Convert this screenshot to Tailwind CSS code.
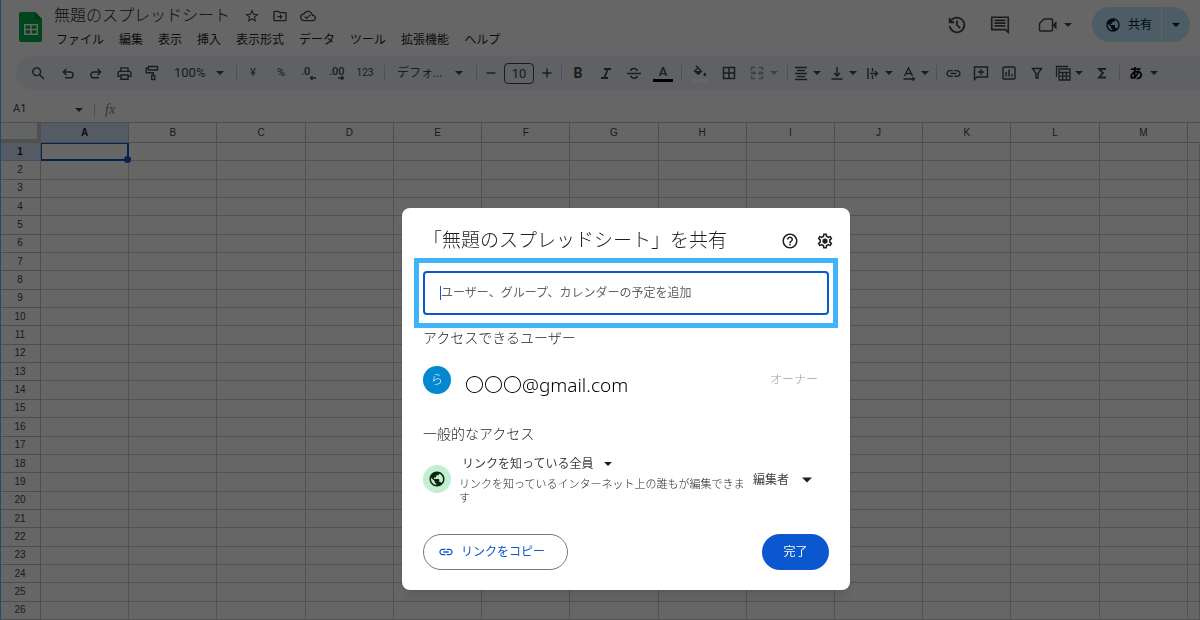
<!DOCTYPE html>
<html lang="ja">
<head>
<meta charset="utf-8">
<title>無題のスプレッドシート</title>
<script src="https://cdn.jsdelivr.net/npm/@tailwindcss/browser@4"></script>
</head>
<body class="relative flex h-screen flex-col overflow-hidden bg-white font-['Roboto','Noto_Sans_CJK_JP',sans-serif] text-xs text-[#444746]">

<svg class="hidden" aria-hidden="true">
  <symbol id="caret" viewBox="0 0 8 8"><path d="M0 2h8L4 6z"/></symbol>
  <symbol id="globe" viewBox="0 0 24 24"><path d="M12 2C6.48 2 2 6.48 2 12s4.48 10 10 10 10-4.48 10-10S17.52 2 12 2zm-1 17.93c-3.95-.49-7-3.85-7-7.93 0-.62.08-1.21.21-1.79L9 15v1c0 1.1.9 2 2 2v1.93zm6.9-2.54c-.26-.81-1-1.39-1.9-1.39h-1v-3c0-.55-.45-1-1-1H8v-2h2c.55 0 1-.45 1-1V7h2c1.1 0 2-.9 2-2v-.41c2.93 1.19 5 4.06 5 7.41 0 2.08-.8 3.97-2.1 5.39z"/></symbol>
  <symbol id="link" viewBox="0 0 24 24"><path d="M3.9 12c0-1.71 1.39-3.1 3.1-3.1h4V7H7c-2.76 0-5 2.24-5 5s2.24 5 5 5h4v-1.9H7c-1.71 0-3.1-1.39-3.1-3.1zM8 13h8v-2H8v2zm9-6h-4v1.9h4c1.71 0 3.1 1.39 3.1 3.1s-1.39 3.1-3.1 3.1h-4V17h4c2.76 0 5-2.24 5-5s-2.24-5-5-5z"/></symbol>
</svg>

<header class="flex h-14 shrink-0 items-start pl-[19px] pr-[10px]">
  <svg class="mt-[11px] h-8 w-6 shrink-0" viewBox="0 0 24 32"><path fill="#00ac47" d="M2 1h14l7 7v21a2 2 0 0 1-2 2H2a2 2 0 0 1-2-2V3a2 2 0 0 1 2-2z"/><path fill="#00832d" d="M16 1l7 7h-7z"/><path fill="#fff" fill-rule="evenodd" d="M5 13h14v11H5zM6.500 14.500v3.200h4.700v-3.200zm6.300 0v3.200h4.700v-3.200zM6.500 19.300v3.200h4.700v-3.200zm6.300 0v3.200h4.700v-3.200z"/></svg>
  <div class="ml-[11px] flex flex-col">
    <div class="mt-1 flex h-6 items-center">
      <h1 class="text-base font-light leading-6 text-[#1f1f1f]">無題のスプレッドシート</h1>
      <div class="ml-[14px] flex items-center gap-3">
        <button aria-label="スター" class="h-4 w-4"><svg class="h-4 w-4" viewBox="0 0 24 24" fill="currentColor"><path d="M22 9.240l-7.190-.620L12 2 9.190 8.630 2 9.240l5.460 4.730L5.820 21 12 17.270 18.180 21l-1.630-7.030L22 9.240zM12 15.400l-3.760 2.270 1-4.280-3.320-2.880 4.380-.380L12 6.100l1.710 4.040 4.380.380-3.320 2.880 1 4.280L12 15.400z"/></svg></button>
        <button aria-label="移動" class="h-4 w-4"><svg class="h-4 w-4" viewBox="0 0 24 24" fill="currentColor"><path d="M20 6h-8l-2-2H4c-1.100 0-2 .9-2 2v12c0 1.100.9 2 2 2h16c1.100 0 2-.9 2-2V8c0-1.100-.9-2-2-2zm0 12H4V6h5.170l2 2H20v10zm-8-1l4-4-4-4v3H8v2h4v3z"/></svg></button>
        <button aria-label="ドライブに保存しました" class="h-4 w-4"><svg class="h-4 w-4" viewBox="0 0 24 24" fill="currentColor"><path d="M19.350 10.040C18.670 6.590 15.640 4 12 4 9.110 4 6.600 5.640 5.350 8.040 2.340 8.360 0 10.910 0 14c0 3.310 2.690 6 6 6h13c2.760 0 5-2.240 5-5 0-2.640-2.050-4.780-4.650-4.960zM19 18H6c-2.210 0-4-1.790-4-4 0-2.050 1.530-3.760 3.560-3.970l1.070-.110.5-.950C8.080 7.140 9.940 6 12 6c2.620 0 4.880 1.860 5.390 4.430l.3 1.500 1.530.110c1.560.1 2.780 1.410 2.780 2.960 0 1.650-1.350 3-3 3zm-9-3.820l-2.090-2.090L6.500 13.500 10 17l6.010-6.010-1.410-1.410z"/></svg></button>
      </div>
    </div>
    <nav class="flex h-6 items-center gap-[15px] pl-[2px] text-xs text-[#1f1f1f]">
      <button>ファイル</button><button>編集</button><button>表示</button><button>挿入</button><button>表示形式</button><button>データ</button><button>ツール</button><button>拡張機能</button><button>ヘルプ</button>
    </nav>
  </div>
  <div class="ml-auto mt-[7px] flex h-[35px] items-center">
    <button aria-label="変更履歴" class="mr-[21px]"><svg class="h-[22px] w-[22px]" viewBox="0 0 24 24" fill="currentColor"><path d="M12 21q-3.450 0-6.012-2.287T3.050 13H5.100q.35 2.600 2.313 4.300T12 19q2.925 0 4.963-2.037T19 12t-2.037-4.962T12 5q-1.725 0-3.225.8T6.250 8H9v2H3V4h2v2.350q1.275-1.600 3.113-2.475T12 3q1.875 0 3.513.713t2.850 1.924 1.925 2.850T21 12t-.712 3.513-1.925 2.850-2.850 1.925T12 21m2.800-4.800L11 12.400V7h2v4.600l3.200 3.200z"/></svg></button>
    <button aria-label="コメント" class="mr-[27px]"><svg class="h-[22px] w-[22px]" viewBox="0 0 24 24" fill="none" stroke="currentColor" stroke-width="1.800"><path d="M3 3.500h18V20l-3-3H3z"/><path d="M6 7h12M6 10h12M6 13h12"/></svg></button>
    <button aria-label="ビデオ通話" class="mr-5 flex items-center gap-[6px]"><svg class="h-5 w-5" viewBox="0 0 20 20"><path fill="none" stroke="currentColor" stroke-width="1.500" stroke-linejoin="round" d="M6 4h7.500q1 0 1 1v10q0 1-1 1h-11q-1 0-1-1V8.500z"/><path fill="currentColor" d="M15 9.800l3.500-4v9l-3.500-4z"/></svg><svg class="h-2 w-2 fill-current"><use href="#caret"/></svg></button>
    <div class="flex h-[35px] overflow-hidden rounded-full bg-[#c2e7ff] text-[#001d35]">
      <button class="flex w-[70px] items-center justify-center gap-[7px] border-r border-white/80 pl-1 text-xs"><svg class="h-4 w-4 fill-current"><use href="#globe"/></svg>共有</button>
      <button aria-label="共有オプション" class="flex w-7 items-center justify-center"><svg class="h-2 w-2 fill-current"><use href="#caret"/></svg></button>
    </div>
  </div>
</header>

<div role="toolbar" class="ml-4 flex h-[34px] shrink-0 items-center rounded-l-full bg-[#edf2fa] pl-2">
  <button aria-label="検索" class="mr-[2px] flex w-7 justify-center"><svg class="h-[17px] w-[17px]" viewBox="0 0 24 24" fill="currentColor"><path d="M15.500 14h-.790l-.280-.270C15.410 12.590 16 11.110 16 9.500 16 5.910 13.090 3 9.500 3S3 5.910 3 9.500 5.910 16 9.500 16c1.610 0 3.090-.590 4.230-1.570l.270.280v.790l5 4.990L20.490 19l-4.990-5zm-6 0C7.010 14 5 11.990 5 9.500S7.010 5 9.500 5 14 7.010 14 9.500 11.990 14 9.500 14z"/></svg></button>
  <button aria-label="元に戻す" class="flex w-7 justify-center"><svg class="h-4 w-4" viewBox="0 0 16 16" fill="none" stroke="currentColor" stroke-width="1.400"><path d="M3.500 7h6.700a2.900 2.900 0 0 1 0 5.800H5M6.300 4L3.400 7l2.900 3"/></svg></button>
  <button aria-label="やり直す" class="flex w-7 justify-center"><svg class="h-4 w-4" viewBox="0 0 16 16" fill="none" stroke="currentColor" stroke-width="1.400"><path d="M12.500 7H5.800a2.900 2.900 0 0 0 0 5.800H11M9.700 4l2.900 3-2.900 3"/></svg></button>
  <button aria-label="印刷" class="flex w-7 justify-center"><svg class="h-[17px] w-[17px]" viewBox="0 0 24 24" fill="currentColor"><path d="M19 8h-1V3H6v5H5c-1.660 0-3 1.340-3 3v6h4v4h12v-4h4v-6c0-1.660-1.340-3-3-3zM8 5h8v3H8V5zm8 12v2H8v-4h8v2zm2-2v-2H6v2H4v-4c0-.550.450-1 1-1h14c.550 0 1 .450 1 1v4h-2z"/></svg></button>
  <button aria-label="書式を貼り付け" class="flex w-7 justify-center"><svg class="h-4 w-4" viewBox="0 0 16 16" fill="none" stroke="currentColor" stroke-width="1.400"><path d="M4.500 1.500h9v3.500h-9zM4.500 3.200H2.200v4.600h7v2.700M7.700 10.500h3v4h-3z"/></svg></button>
  <button aria-label="ズーム" class="flex w-[66px] items-center justify-between px-2 text-[13px]">100%<svg class="h-2 w-2 fill-current"><use href="#caret"/></svg></button>
  <span class="ml-1 mr-[2px] h-4 w-px bg-[#c7c7c7]"></span>
  <button class="w-7 text-[11px]">¥</button>
  <button class="w-7 text-[11px]">%</button>
  <button aria-label="小数点以下の桁数を減らす" class="flex w-7 justify-center"><svg class="h-4 w-4" viewBox="0 0 16 16"><text x="0" y="10" class="fill-current text-[11px] font-medium">.0</text><path fill="none" stroke="currentColor" stroke-width="1.300" d="M15 13H9.500M11.500 11l-2 2 2 2"/></svg></button>
  <button aria-label="小数点以下の桁数を増やす" class="flex w-7 justify-center"><svg class="h-4 w-4" viewBox="0 0 16 16"><text x="0" y="10" class="fill-current text-[11px] font-medium">.00</text><path fill="none" stroke="currentColor" stroke-width="1.300" d="M9 13h5.500M12.500 11l2 2-2 2"/></svg></button>
  <button class="w-7 text-[10px]">123</button>
  <span class="ml-[5px] mr-1 h-4 w-px bg-[#c7c7c7]"></span>
  <button aria-label="フォント" class="flex w-[82px] items-center justify-between px-2 text-xs">デフォ...<svg class="h-2 w-2 fill-current"><use href="#caret"/></svg></button>
  <span class="ml-[5px] mr-[2px] h-4 w-px bg-[#c7c7c7]"></span>
  <button aria-label="縮小" class="flex w-6 justify-center"><svg class="h-3 w-3" viewBox="0 0 12 12" stroke="currentColor" stroke-width="1.400"><path d="M1.500 6h9"/></svg></button>
  <input aria-label="フォントサイズ" value="10" class="mx-px h-[21px] w-[30px] rounded border border-[#444746] text-center text-[13px]">
  <button aria-label="拡大" class="flex w-6 justify-center"><svg class="h-3 w-3" viewBox="0 0 12 12" stroke="currentColor" stroke-width="1.400"><path d="M1.500 6h9M6 1.500v9"/></svg></button>
  <span class="mx-[2px] h-4 w-px bg-[#c7c7c7]"></span>
  <button class="w-7 text-sm font-bold">B</button>
  <button aria-label="斜体" class="flex w-7 justify-center"><svg class="h-4 w-4" viewBox="0 0 16 16" fill="none" stroke="currentColor" stroke-width="1.800"><path d="M6 4h7M3 13h7M9.800 4L6.300 13"/></svg></button>
  <button aria-label="取り消し線" class="flex w-7 justify-center"><svg class="h-4 w-4" viewBox="0 0 16 16" fill="none" stroke="currentColor" stroke-width="1.500"><path d="M1 8.500h14M11.300 6C11 4.300 9.800 3.500 8 3.500S4.800 4.400 4.800 5.900M4.700 10.700c.3 1.700 1.500 2.500 3.300 2.500s3.200-.9 3.200-2.500"/></svg></button>
  <button aria-label="テキストの色" class="flex w-[30px] flex-col items-center"><span class="text-[13px] font-medium leading-[14px]">A</span><span class="h-[3px] w-5 bg-black"></span></button>
  <span class="mx-[3px] h-4 w-px bg-[#c7c7c7]"></span>
  <button aria-label="塗りつぶしの色" class="flex w-[30px] flex-col items-center"><svg class="h-[14px] w-[14px]" viewBox="0 0 14 14"><path fill="none" stroke="currentColor" stroke-width="1.300" d="M3 .7l5.500 5.500L5.300 9.400 1.600 6l4-3.500"/><path fill="currentColor" d="M1.700 6h7L5.300 9.700zM11.800 7.300s1.400 1.600 1.400 2.500a1.400 1.400 0 0 1-2.800 0c0-.9 1.400-2.500 1.400-2.500z"/></svg><span class="h-[3px] w-4 bg-white"></span></button>
  <button aria-label="枠線" class="flex w-7 justify-center"><svg class="h-[14px] w-[14px]" viewBox="0 0 14 14" fill="none" stroke="currentColor" stroke-width="1.500"><path d="M1.500 1.500h11v11h-11zM7 1.500v11M1.500 7h11"/></svg></button>
  <button aria-label="セルを結合" class="ml-[7px] mr-[5px] flex w-8 items-center gap-[6px] text-[#444746]/50"><svg class="h-[14px] w-[14px]" viewBox="0 0 14 14" fill="none" stroke="currentColor" stroke-width="1.400"><path d="M5 1.500H1.500v3M9 1.500h3.500v3M5 12.500H1.500v-3M9 12.500h3.500v-3M.5 7H5M3.500 5.500L5 7 3.500 8.500M13.500 7H9M10.500 5.500L9 7l1.500 1.500"/></svg><svg class="h-2 w-2 fill-current"><use href="#caret"/></svg></button>
  <span class="mr-1 h-4 w-px bg-[#c7c7c7]"></span>
  <button aria-label="水平方向の配置" class="flex w-9 items-center gap-[3px]"><svg class="h-[18px] w-[18px]" viewBox="0 0 18 18" stroke="currentColor" stroke-width="1.400"><path d="M3 3.500h12M5 6.500h8M3 9.500h12M5 12.500h8M3 15.500h12"/></svg><svg class="h-2 w-2 fill-current"><use href="#caret"/></svg></button>
  <button aria-label="垂直方向の配置" class="flex w-9 items-center gap-[3px]"><svg class="h-[18px] w-[18px]" viewBox="0 0 18 18" fill="none" stroke="currentColor" stroke-width="1.500"><path d="M3.500 15h11M9 3v9M6 9l3 3 3-3"/></svg><svg class="h-2 w-2 fill-current"><use href="#caret"/></svg></button>
  <button aria-label="テキストを折り返す" class="flex w-9 items-center gap-[3px]"><svg class="h-[18px] w-[18px]" viewBox="0 0 18 18" fill="none" stroke="currentColor" stroke-width="1.400"><path d="M4 4v11M8.500 4v3.500M8.500 11.500V15M6 9.500h7.500M11 7l2.500 2.500L11 12"/></svg><svg class="h-2 w-2 fill-current"><use href="#caret"/></svg></button>
  <button aria-label="テキストの回転" class="flex w-9 items-center gap-[3px]"><svg class="h-[18px] w-[18px]" viewBox="0 0 18 18" fill="none" stroke="currentColor" stroke-width="1.400"><path d="M4.500 12L8.500 4l4 8M6 9.500h5M3.500 15h10.500M12.500 13.200l1.800 1.800-1.800 1.800"/></svg><svg class="h-2 w-2 fill-current"><use href="#caret"/></svg></button>
  <span class="mr-[2px] h-4 w-px bg-[#c7c7c7]"></span>
  <button aria-label="リンクを挿入" class="flex w-7 justify-center"><svg class="h-[17px] w-[17px] fill-current"><use href="#link"/></svg></button>
  <button aria-label="コメントを挿入" class="flex w-7 justify-center"><svg class="h-4 w-4" viewBox="0 0 16 16" fill="none" stroke="currentColor" stroke-width="1.400"><path d="M1.500 2h13v10H4l-2.500 2.500zM8 4v6M5 7h6"/></svg></button>
  <button aria-label="グラフを挿入" class="flex w-7 justify-center"><svg class="h-4 w-4" viewBox="0 0 16 16" fill="none" stroke="currentColor" stroke-width="1.400"><rect x="2" y="2" width="12" height="12" rx="1"/><path d="M5 7v4.500M8 4.500v7M11 9v2.500"/></svg></button>
  <button aria-label="フィルタ" class="flex w-7 justify-center"><svg class="h-4 w-4" viewBox="0 0 16 16" fill="none" stroke="currentColor" stroke-width="1.400"><path d="M3.500 3.500h9L9 8.500V13H7V8.500z"/></svg></button>
  <button aria-label="テーブル" class="ml-[3px] flex w-[34px] items-center gap-[3px]"><svg class="h-[18px] w-[18px]" viewBox="0 0 18 18" fill="none" stroke="currentColor" stroke-width="1.300"><path d="M2.500 13V2.500H14M5 5h11v11H5zM5 8.500h11M5 12.200h11M8.700 8.500V16M12.300 8.500V16"/></svg><svg class="h-2 w-2 fill-current"><use href="#caret"/></svg></button>
  <button aria-label="関数" class="flex w-7 justify-center"><svg class="h-4 w-4" viewBox="0 0 16 16" fill="none" stroke="currentColor" stroke-width="1.800"><path d="M12 4H5l4 4-4 4.500h7"/></svg></button>
  <span class="ml-[3px] mr-[9px] h-4 w-px bg-[#c7c7c7]"></span>
  <button aria-label="入力ツール" class="flex items-center gap-[7px] text-sm font-bold leading-5 text-black">あ<svg class="h-2 w-2 fill-[#444746]"><use href="#caret"/></svg></button>
</div>

<div class="flex h-8 shrink-0 items-center pl-[13px] pt-[7px]">
  <button aria-label="名前ボックス" class="flex w-[70px] items-center justify-between text-[11px]">A1<svg class="h-2 w-2 fill-current"><use href="#caret"/></svg></button>
  <span class="ml-[11px] mr-[10px] h-[14px] w-px bg-[#c7c7c7]"></span>
  <span class="font-['Liberation_Serif',serif] text-sm italic text-[#80868b]">fx</span>
</div>

<main class="min-h-0 flex-1">
  <table class="h-full w-full table-fixed border-separate border-spacing-0 font-['Liberation_Sans',sans-serif] text-[10px] leading-none">
    <colgroup id="cols"></colgroup>
    <thead><tr id="letters" class="h-[21px]"></tr></thead>
    <tbody id="rows"></tbody>
  </table>
</main>

<div class="fixed inset-0 border-l border-[#1f4d63] bg-black/60"></div>

<section role="dialog" aria-labelledby="dialog-title" class="fixed left-[402px] top-[208px] w-[448px] rounded-lg bg-white px-[21px] pb-5 pt-[14px] text-[#1f1f1f] shadow-lg">
  <div class="flex h-9 items-center pt-[2px]">
    <h2 id="dialog-title" class="text-[19px] font-light">「無題のスプレッドシート」を共有</h2>
    <div class="-mr-[5px] ml-auto flex gap-[17px]">
      <button aria-label="ヘルプ"><svg class="h-[18px] w-[18px]" viewBox="0 0 24 24" fill="currentColor"><path d="M11 18h2v-2h-2v2zm1-16C6.480 2 2 6.480 2 12s4.480 10 10 10 10-4.480 10-10S17.520 2 12 2zm0 18c-4.410 0-8-3.590-8-8s3.590-8 8-8 8 3.590 8 8-3.590 8-8 8zm0-14c-2.210 0-4 1.790-4 4h2c0-1.100.9-2 2-2s2 .9 2 2c0 2-3 1.750-3 5h2c0-2.250 3-2.500 3-5 0-2.210-1.790-4-4-4z"/></svg></button>
      <button aria-label="設定"><svg class="h-[18px] w-[18px]" viewBox="0 0 24 24" fill="currentColor"><path d="M19.430 12.980c.040-.320.070-.640.070-.980 0-.340-.030-.660-.070-.980l2.110-1.650c.190-.150.240-.420.120-.640l-2-3.460c-.090-.160-.260-.250-.440-.250-.060 0-.120.010-.170.030l-2.490 1c-.520-.400-1.080-.730-1.690-.980l-.380-2.650C14.460 2.180 14.250 2 14 2h-4c-.250 0-.460.180-.490.420l-.380 2.650c-.610.250-1.170.590-1.690.980l-2.490-1c-.060-.020-.120-.030-.180-.030-.170 0-.340.090-.430.250l-2 3.460c-.130.220-.070.490.120.640l2.110 1.650c-.040.320-.070.650-.070.980 0 .330.030.660.070.980l-2.110 1.650c-.190.150-.240.420-.120.640l2 3.460c.090.160.260.250.440.250.060 0 .120-.010.170-.030l2.490-1c.520.400 1.080.730 1.690.980l.380 2.650c.030.240.240.420.490.420h4c.250 0 .460-.180.490-.420l.380-2.650c.610-.250 1.170-.590 1.690-.980l2.490 1c.060.020.120.030.180.030.170 0 .340-.090.430-.250l2-3.460c.120-.220.070-.490-.120-.640l-2.110-1.650zm-1.980-1.710c.040.310.050.520.050.730 0 .210-.020.430-.050.730l-.140 1.130.890.700 1.080.840-.700 1.210-1.270-.510-1.040-.420-.900.680c-.430.320-.840.560-1.250.730l-1.060.430-.160 1.130-.200 1.350h-1.400l-.190-1.350-.160-1.130-1.060-.430c-.430-.180-.830-.410-1.230-.710l-.910-.700-1.060.430-1.270.510-.700-1.210 1.080-.840.890-.700-.140-1.130c-.030-.310-.050-.540-.050-.740s.020-.430.050-.730l.140-1.130-.890-.700-1.080-.840.700-1.210 1.270.510 1.040.420.900-.680c.430-.320.840-.560 1.250-.730l1.060-.430.160-1.130.200-1.350h1.390l.190 1.350.160 1.130 1.060.430c.430.180.830.410 1.230.710l.910.700 1.060-.430 1.270-.510.700 1.210-1.070.850-.890.700.140 1.130z"/><circle cx="12" cy="12" r="3.500"/></svg></button>
    </div>
  </div>
  <div class="relative mt-[13px]">
    <input aria-label="ユーザー、グループ、カレンダーの予定を追加" placeholder="ユーザー、グループ、カレンダーの予定を追加" class="h-11 w-full rounded border-2 border-[#0b57d0] px-4 text-xs outline-none placeholder:text-[#5f6368]">
    <span class="absolute left-[17px] top-[15px] h-[14px] w-px bg-[#0b57d0]"></span>
    <span class="pointer-events-none absolute -inset-x-[9px] -bottom-[13px] -top-[13px] border-[5px] border-[#3fb4fb]"></span>
  </div>
  <h3 class="mt-[13px] text-sm font-light leading-5">アクセスできるユーザー</h3>
  <div class="mt-[14px] flex h-9 items-center">
    <span class="flex h-7 w-7 items-center justify-center rounded-full bg-[#0288d1] text-xs font-light text-white">ら</span>
    <span class="ml-[14px] pt-[10px] font-['Noto_Sans','Noto_Sans_CJK_JP',sans-serif] text-[19px] font-light leading-6 text-black">〇〇〇@gmail.com</span>
    <span class="ml-auto mr-[11px] text-xs font-light text-[#9aa0a6]">オーナー</span>
  </div>
  <h3 class="mt-[26px] text-sm font-light leading-5">一般的なアクセス</h3>
  <div class="mt-3 flex h-[50px] items-start">
    <span class="mt-[9px] flex h-7 w-7 shrink-0 items-center justify-center rounded-full bg-[#c4eed0] text-[#072711]"><svg class="h-[18px] w-[18px] fill-current"><use href="#globe"/></svg></span>
    <div class="ml-2 w-[287px] shrink-0">
      <button class="flex items-center gap-[11px] pl-[3px] text-xs leading-4 text-[#3c4043]">リンクを知っている全員<svg class="h-2 w-2 fill-[#1f1f1f]"><use href="#caret"/></svg></button>
      <p class="pt-[6px] text-[11px] font-light leading-[14px]">リンクを知っているインターネット上の誰もが編集できます</p>
    </div>
    <button class="ml-[7px] mt-[15px] flex items-center gap-[13px] text-xs leading-[18px] text-[#3c4043]">編集者<svg class="h-[10px] w-[10px] fill-[#1f1f1f]"><use href="#caret"/></svg></button>
  </div>
  <div class="mt-7 flex items-center justify-between">
    <button class="flex h-9 w-[145px] items-center gap-[7px] rounded-full border border-[#747775] pl-[14px] text-xs text-[#0b57d0]"><svg class="h-4 w-4 fill-current"><use href="#link"/></svg>リンクをコピー</button>
    <button class="h-9 w-[67px] rounded-full bg-[#0b57d0] text-xs text-white">完了</button>
  </div>
</section>

<script>
  const letters = 'ABCDEFGHIJKLM'.split('');
  document.getElementById('cols').innerHTML =
    '<col class="w-[41px]">' + letters.map(() => '<col>').join('') + '<col class="w-3">';
  document.getElementById('letters').innerHTML =
    '<th class="border-b-4 border-r-4 border-t border-b-[#c7c7c7] border-r-[#c7c7c7] border-t-[#c0c0c0] bg-[#f8f9fa]"></th>' +
    letters.map((l, i) => i === 0
      ? '<th class="border-y border-r border-[#c0c0c0] bg-[#d3e3fd] font-bold text-[#1f1f1f]">' + l + '</th>'
      : '<th class="border-y border-r border-[#c0c0c0] font-normal">' + l + '</th>').join('') +
    '<th class="border-y border-[#c0c0c0]"></th>';
  let html = '';
  for (let r = 1; r <= 26; r++) {
    html += r === 1
      ? '<tr><th class="border-b border-r border-[#c0c0c0] bg-[#d3e3fd] p-0 font-bold text-[#1f1f1f]">1</th>'
      : '<tr><th class="border-b border-r border-[#c0c0c0] p-0 font-normal">' + r + '</th>';
    for (let c = 0; c <= letters.length; c++) {
      html += r === 1 && c === 0
        ? '<td class="relative border-b-2 border-l border-r-2 border-t border-[#0b57d0] p-0"><span class="absolute -bottom-1 -right-1 h-[7px] w-[7px] rounded-full bg-[#0b57d0]"></span></td>'
        : '<td class="border-b border-r border-[#cccccc] p-0"></td>';
    }
    html += '</tr>';
  }
  document.getElementById('rows').innerHTML = html;
</script>
</body>
</html>
